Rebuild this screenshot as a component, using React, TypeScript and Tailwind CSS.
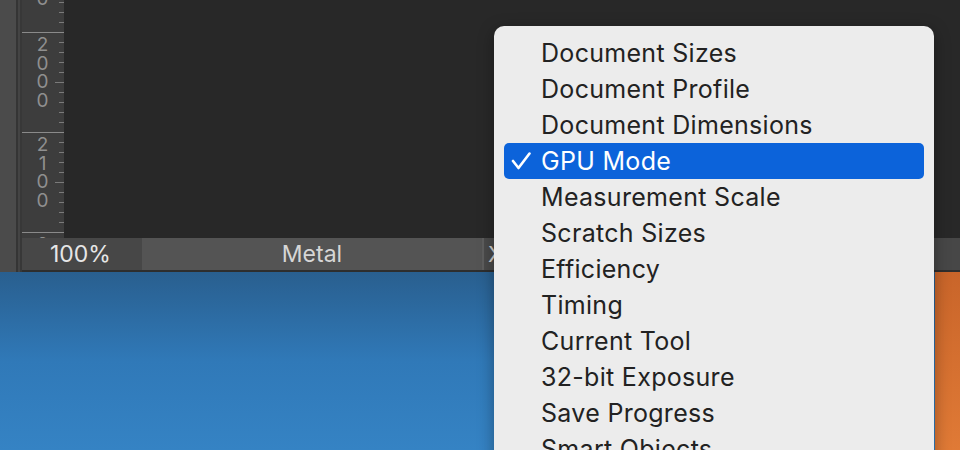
import React from 'react';

const items = [
  'Document Sizes',
  'Document Profile',
  'Document Dimensions',
  'GPU Mode',
  'Measurement Scale',
  'Scratch Sizes',
  'Efficiency',
  'Timing',
  'Current Tool',
  '32-bit Exposure',
  'Save Progress',
  'Smart Objects',
];

const Ruler = () => {
  const ticks: number[] = [];
  for (let y = -68; y < 240; y += 10) ticks.push(y);
  return (
    <svg width="42" height="238" className="block">
      {ticks.map((y) => {
        const major = ((y - 32) % 100 + 100) % 100 === 0;
        const mid = ((y - 82) % 100 + 100) % 100 === 0;
        if (major) return <line key={y} x1="0" x2="42" y1={y + 0.5} y2={y + 0.5} stroke="#8a8a8a" strokeWidth="1" />;
        return <line key={y} x1={mid ? 33 : 37} x2="42" y1={y + 0.5} y2={y + 0.5} stroke="#7a7a7a" strokeWidth="1" />;
      })}
      <g fill="#8f8f8f" fontFamily="Inter, sans-serif" fontSize="19" textAnchor="middle">
        <text x="20.5" y="5">0</text>
        <text x="20.5" y="51">
          {['2', '0', '0', '0'].map((d, i) => (
            <tspan key={i} x="20.5" y={51 + i * 18.5}>{d}</tspan>
          ))}
        </text>
        <text x="20.5" y="151">
          {['2', '1', '0', '0'].map((d, i) => (
            <tspan key={i} x="20.5" y={151 + i * 18.5}>{d}</tspan>
          ))}
        </text>
        <text x="20.5" y="251">2</text>
      </g>
    </svg>
  );
};

export default function App() {
  return (
    <div className="relative w-[960px] h-[450px] overflow-hidden bg-[#282828]" style={{ fontFamily: 'Inter, "Noto Sans", sans-serif' }}>
      {/* app window */}
      <div className="flex h-[272px]">
        <div className="w-[16px] bg-[#4b4b4b]" />
        <div className="w-[2px] bg-[#353535]" />
        <div className="w-[2px] bg-[#444444]" />
        <div className="w-[2px] bg-[#383838]" />
        <div className="flex-1 flex flex-col">
          <div className="flex h-[238px]">
            <div className="w-[42px] bg-[#3d3d3d] overflow-hidden">
              <Ruler />
            </div>
            <div className="flex-1 bg-[#282828]" />
          </div>
          <div className="flex h-[32px] bg-[#474747] text-[#e6e6e6]">
            <div className="w-[120px] flex items-center pl-[28px] text-[23px]">100%</div>
            <div className="w-[340px] bg-[#545454] flex items-center justify-center text-[23px] text-[#d6d6d6]">Metal</div>
            <div className="w-[2px] bg-[#5e5e5e]" />
            <div className="w-[30px] bg-[#4a4a4a] flex items-center pl-[4px] text-[22px] text-[#cfcfcf]">X</div>
            <div className="flex-1" />
          </div>
          <div className="h-[2px] bg-[#2e2e2e]" />
        </div>
      </div>
      {/* desktop */}
      <div className="flex h-[178px]">
        <div className="flex-1 bg-gradient-to-b from-[#295f8f] via-[#3079b8] to-[#3583c4]" />
        <div className="w-[25px] bg-gradient-to-b from-[#c9652a] to-[#e07a36]" />
      </div>

      {/* status menu */}
      <div className="absolute left-[494px] top-[26px] w-[440px] h-[460px] rounded-[10px] bg-[#ececec] shadow-[0_4px_16px_rgba(0,0,0,0.35)] pt-[9px] px-[10px]">
        {items.map((label) => {
          const active = label === 'GPU Mode';
          return (
            <div
              key={label}
              className={
                'relative h-[36px] flex items-center pl-[37px] text-[25px] tracking-[0.3px] leading-none rounded-[5px] ' +
                (active ? 'bg-[#0c63da] text-white' : 'text-[#222222]')
              }
            >
              {active && (
                <svg className="absolute left-[7px] top-[9px]" width="20" height="18" viewBox="0 0 20 18">
                  <polyline points="2,9 7.5,16 18.5,1.5" fill="none" stroke="white" strokeWidth="2.6" strokeLinecap="round" strokeLinejoin="round" />
                </svg>
              )}
              <span>{label}</span>
            </div>
          );
        })}
      </div>
    </div>
  );
}
